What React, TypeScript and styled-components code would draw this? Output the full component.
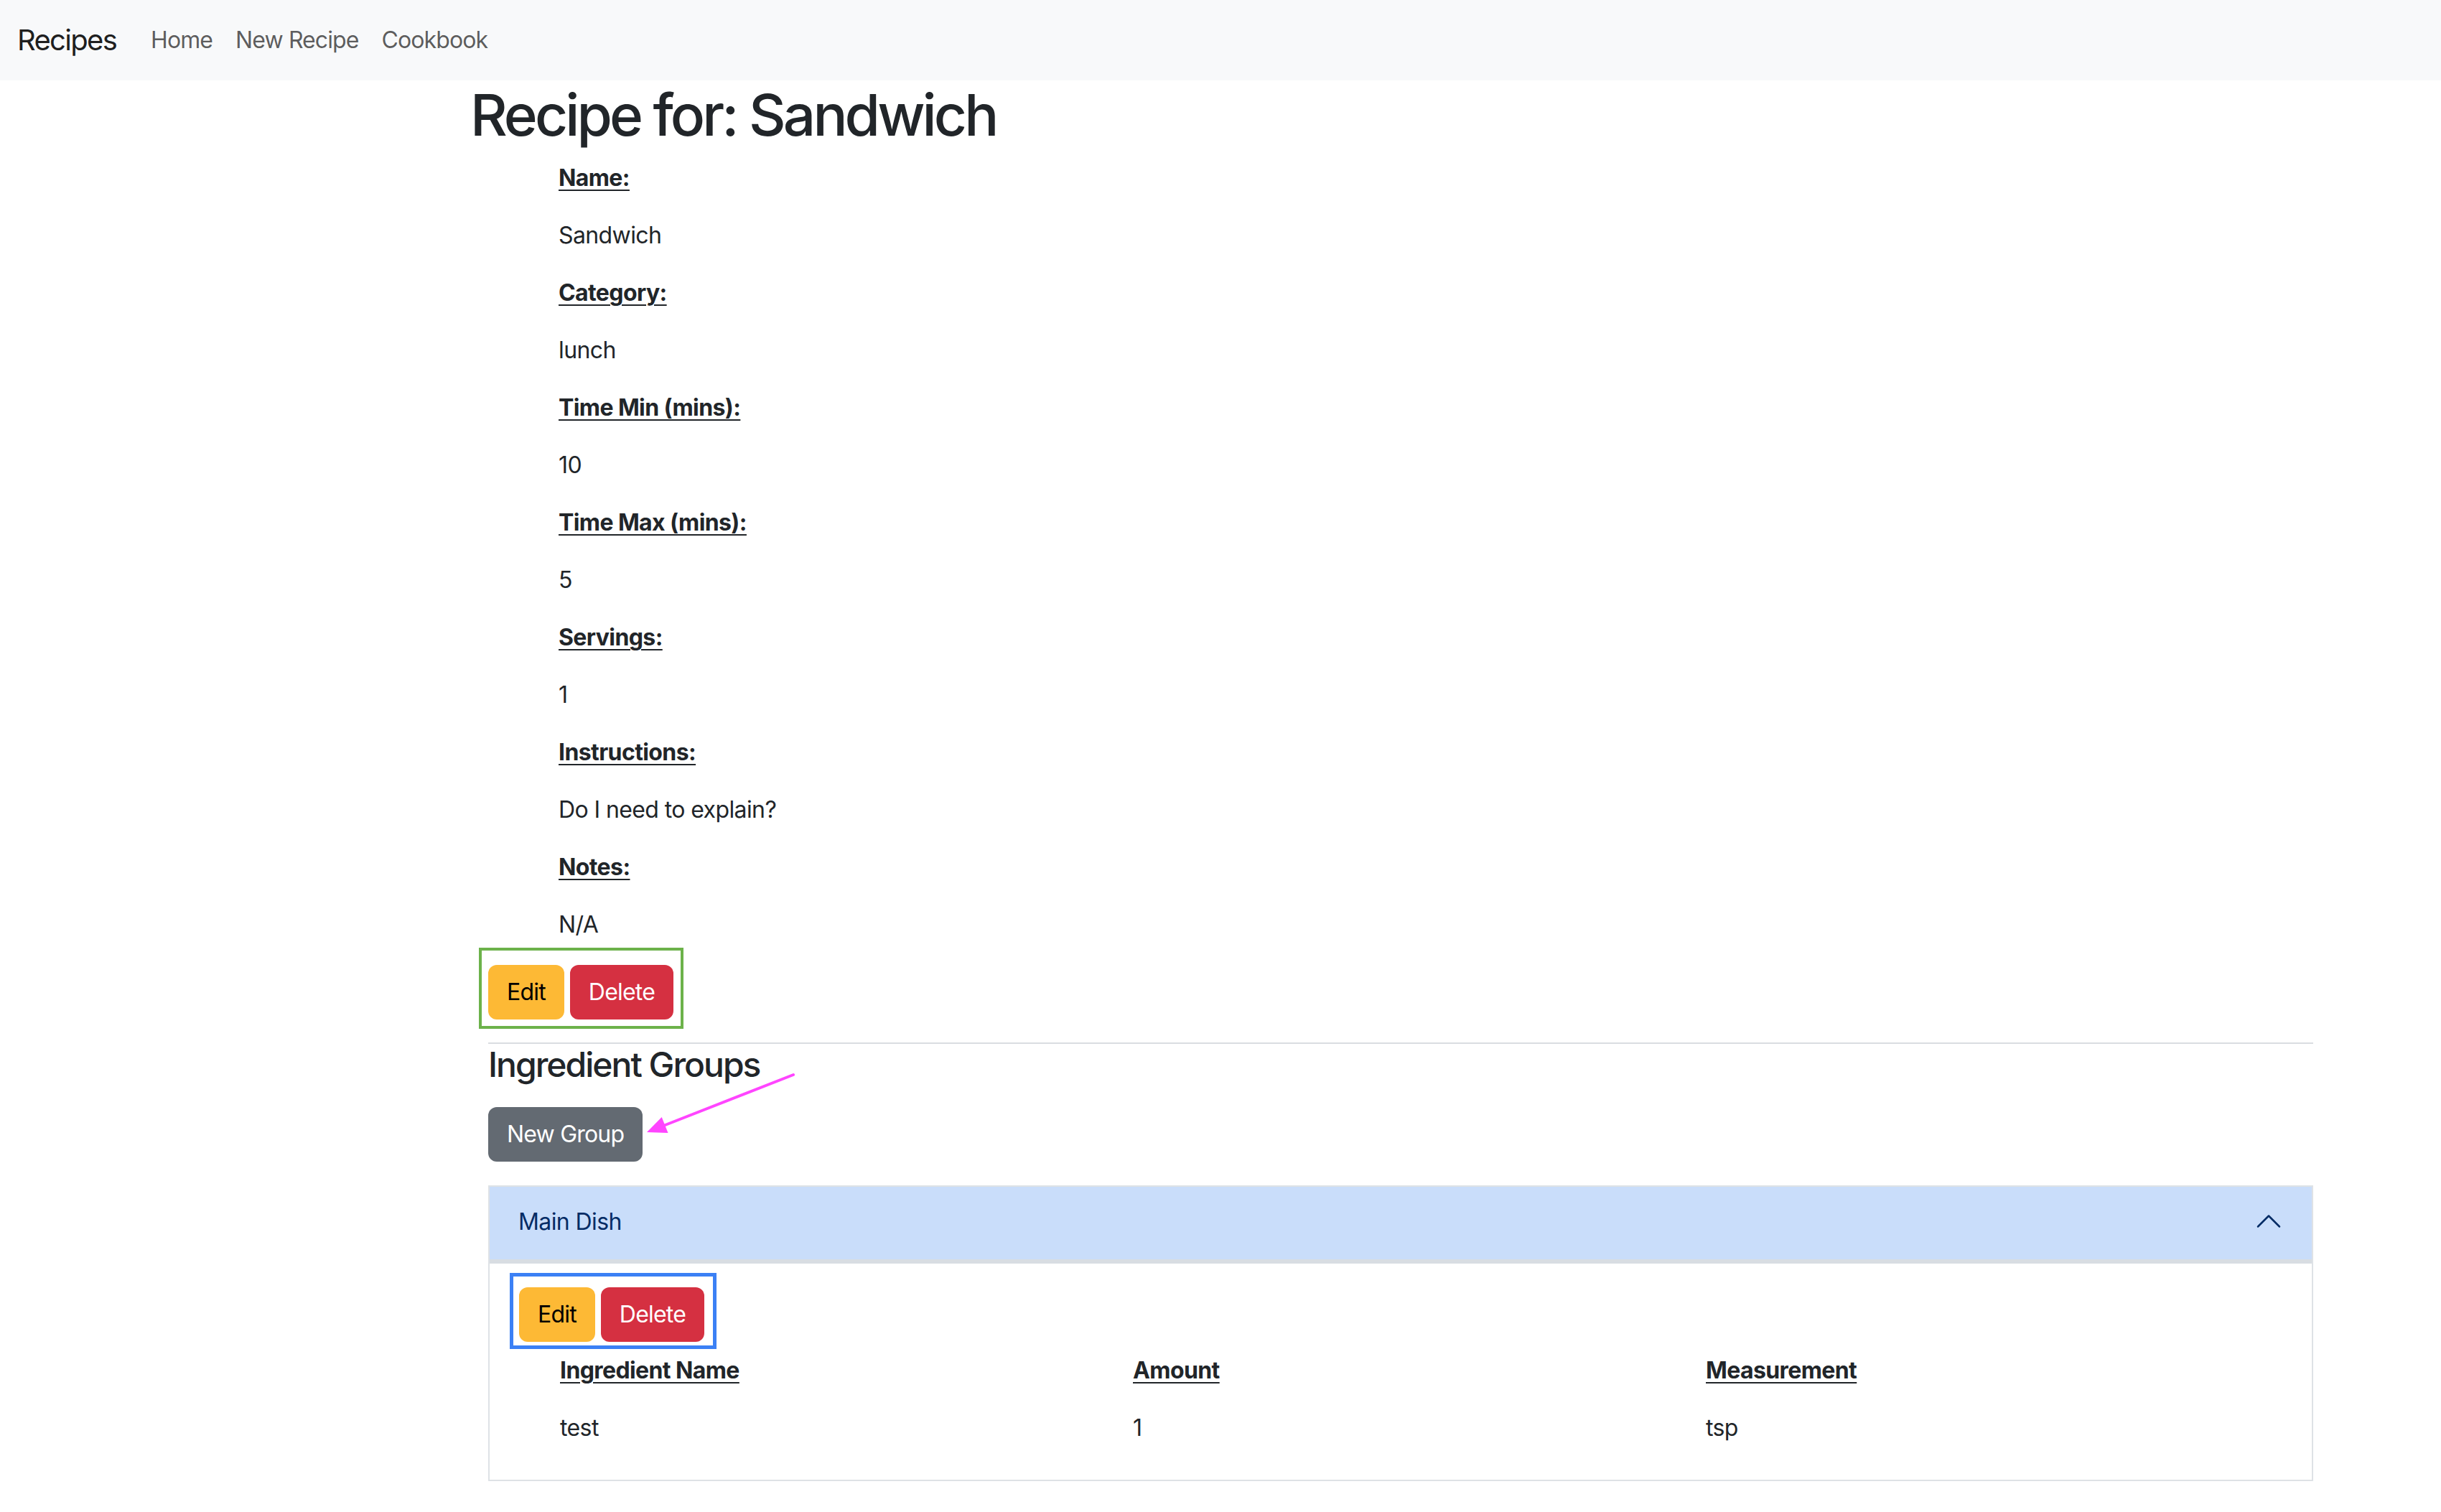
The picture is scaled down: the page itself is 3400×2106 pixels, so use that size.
import React from "react";
import styled, { createGlobalStyle } from "styled-components";

const GlobalStyle = createGlobalStyle`
  html, body { margin: 0; padding: 0; background: #ffffff; }
  body {
    font-family: Inter, "Liberation Sans", Arial, sans-serif;
    color: #212529;
    -webkit-font-smoothing: antialiased;
  }
  * { box-sizing: border-box; }
`;

const Navbar = styled.nav`
  display: flex;
  align-items: center;
  height: 112px;
  padding: 0 24px;
  background: #f8f9fa;
`;

const Brand = styled.a`
  font-size: 40px;
  line-height: 60px;
  color: rgba(0, 0, 0, 0.9);
  margin-right: 32px;
  text-decoration: none;
  letter-spacing: -1.7px;
`;

const NavLink = styled.a`
  font-size: 32px;
  line-height: 48px;
  padding: 0 16px;
  color: rgba(0, 0, 0, 0.65);
  text-decoration: none;
  letter-spacing: -0.9px;
`;

const Main = styled.main`
  padding: 0 178px 0 655px;
`;

const Title = styled.h1`
  margin: 0 0 16px;
  font-size: 80px;
  font-weight: 500;
  line-height: 1.2;
  letter-spacing: -3.9px;
`;

const DetailList = styled.div`
  padding-left: 123px;
`;

const Label = styled.p`
  margin: 0 0 32px;
  font-size: 32px;
  line-height: 48px;
  font-weight: 700;
  text-decoration: underline;
  text-decoration-thickness: 2px;
  text-underline-offset: 5px;
  letter-spacing: -0.6px;
`;

const Value = styled.p`
  margin: 0 0 32px;
  font-size: 32px;
  line-height: 48px;
  letter-spacing: -0.6px;
`;

const Section = styled.section`
  margin-left: 25px;
`;

const ButtonGroup = styled.div`
  position: relative;
  display: inline-flex;
  gap: 8px;
`;

const Annotation = styled.span<{ $color: string; $inset: string; $width: number }>`
  position: absolute;
  inset: ${(p) => p.$inset};
  border: ${(p) => p.$width}px solid ${(p) => p.$color};
  pointer-events: none;
`;

const Button = styled.button<{ $variant: "warning" | "danger" | "secondary" }>`
  font-family: inherit;
  font-size: 32px;
  line-height: 48px;
  padding: 12px 24px;
  border: 2px solid transparent;
  border-radius: 12px;
  letter-spacing: -0.8px;
  cursor: pointer;
  background: ${(p) =>
    p.$variant === "warning" ? "#fdb935" : p.$variant === "danger" ? "#d53041" : "#636a72"};
  color: ${(p) => (p.$variant === "warning" ? "#000000" : "#ffffff")};
`;

const Divider = styled.hr`
  margin: 32px 0 0;
  border: 0;
  border-top: 2px solid #dadde1;
`;

const SectionTitle = styled.h4`
  margin: 0 0 30px;
  font-size: 48px;
  font-weight: 500;
  line-height: 1.2;
  letter-spacing: -2px;
`;

const NewGroupRow = styled.div`
  position: relative;
  margin-bottom: 33px;
`;

const Arrow = styled.svg`
  position: absolute;
  left: 210px;
  top: -52px;
  width: 230px;
  height: 100px;
  overflow: visible;
`;

const Accordion = styled.div`
  border: 2px solid #dee2e6;
`;

const AccordionHeader = styled.div`
  display: flex;
  align-items: center;
  justify-content: space-between;
  height: 107px;
  padding: 0 40px 4px;
  background: #c9ddfa;
  border-bottom: 6px solid #d8dde2;
  color: #052c65;
  font-size: 32px;
  letter-spacing: -0.6px;
`;

const Chevron = styled.svg`
  width: 40px;
  height: 40px;
  flex-shrink: 0;
`;

const AccordionBody = styled.div`
  padding: 33px 40px 32px 41px;
`;

const IngredientTable = styled.div`
  display: grid;
  grid-template-columns: 798px 798px 1fr;
  padding-left: 57px;
  margin-top: 16px;
`;

const HeadCell = styled(Label)``;

const Cell = styled(Value)`
  margin-bottom: 16px;
`;

const details: [string, string][] = [
  ["Name:", "Sandwich"],
  ["Category:", "lunch"],
  ["Time Min (mins):", "10"],
  ["Time Max (mins):", "5"],
  ["Servings:", "1"],
  ["Instructions:", "Do I need to explain?"],
  ["Notes:", "N/A"],
];

export default function App() {
  return (
    <>
      <GlobalStyle />
      <Navbar>
        <Brand>Recipes</Brand>
        <NavLink>Home</NavLink>
        <NavLink>New Recipe</NavLink>
        <NavLink>Cookbook</NavLink>
      </Navbar>
      <Main>
        <Title>Recipe for: Sandwich</Title>
        <DetailList>
          {details.map(([label, value]) => (
            <React.Fragment key={label}>
              <Label>{label}</Label>
              <Value>{value}</Value>
            </React.Fragment>
          ))}
        </DetailList>
        <Section>
          <ButtonGroup>
            <Annotation $color="#6cb24a" $width={4} $inset="-24px -14px -13px -13px" />
            <Button $variant="warning">Edit</Button>
            <Button $variant="danger">Delete</Button>
          </ButtonGroup>
          <Divider />
          <SectionTitle>Ingredient Groups</SectionTitle>
          <NewGroupRow>
            <Button $variant="secondary">New Group</Button>
            <Arrow viewBox="0 0 230 100">
              <line x1="215" y1="7" x2="34" y2="78" stroke="#ff45ff" strokeWidth="4" strokeLinecap="round" />
              <polygon points="11,87 31.7,66 40.5,88" fill="#ff45ff" />
            </Arrow>
          </NewGroupRow>
          <Accordion>
            <AccordionHeader>
              <span>Main Dish</span>
              <Chevron viewBox="0 0 16 16" fill="none" stroke="#052c65" strokeLinecap="round" strokeLinejoin="round">
                <path d="M2 11L8 5L14 11" />
              </Chevron>
            </AccordionHeader>
            <AccordionBody>
              <ButtonGroup>
                <Annotation $color="#3b80f5" $width={5} $inset="-20px -17px -10px -13px" />
                <Button $variant="warning">Edit</Button>
                <Button $variant="danger">Delete</Button>
              </ButtonGroup>
              <IngredientTable>
                <HeadCell>Ingredient Name</HeadCell>
                <HeadCell>Amount</HeadCell>
                <HeadCell>Measurement</HeadCell>
                <Cell>test</Cell>
                <Cell>1</Cell>
                <Cell>tsp</Cell>
              </IngredientTable>
            </AccordionBody>
          </Accordion>
        </Section>
      </Main>
    </>
  );
}
